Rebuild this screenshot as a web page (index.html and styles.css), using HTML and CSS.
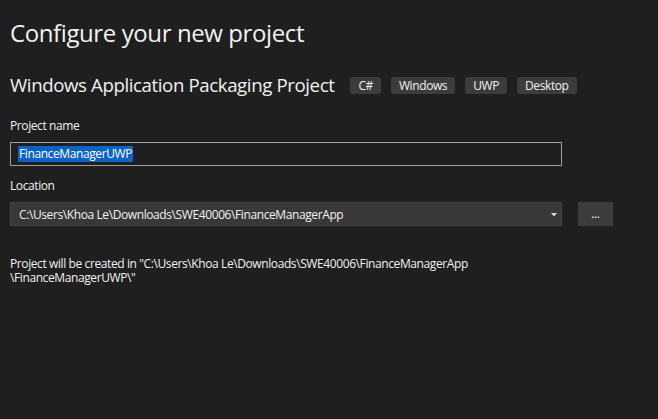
FILE: index.html
```html
<!DOCTYPE html>
<html lang="en">
<head>
<meta charset="utf-8">
<title>Configure your new project</title>
<link rel="stylesheet" href="styles.css">
</head>
<body>
<main class="page">
  <h1 class="title">Configure your new project</h1>
  <div class="subtitle-row">
    <h2 class="subtitle">Windows Application Packaging Project</h2>
    <div class="tags">
      <span class="tag">C#</span>
      <span class="tag">Windows</span>
      <span class="tag">UWP</span>
      <span class="tag">Desktop</span>
    </div>
  </div>

  <label class="label label-name">Project name</label>
  <div class="textbox"><span class="selected">FinanceManagerUWP</span></div>

  <label class="label label-location">Location</label>
  <div class="location-row">
    <div class="combo">
      <span class="combo-text">C:\Users\Khoa Le\Downloads\SWE40006\FinanceManagerApp</span>
      <svg class="arrow" width="6" height="3" viewBox="0 0 6 3"><path d="M0 0H6L3.5 3H2.5Z" fill="#d8d8d8"/></svg>
    </div>
    <div class="browse">...</div>
  </div>

  <p class="info">Project will be created in "C:\Users\Khoa Le\Downloads\SWE40006\FinanceManagerApp<br>\FinanceManagerUWP\"</p>
</main>
</body>
</html>
```

FILE: styles.css
```css
html, body {
  margin: 0;
  padding: 0;
  background: #1f1f1f;
  height: 100%;
}
body {
  font-family: "Open Sans", "Noto Sans", sans-serif;
  color: #f1f1f1;
  letter-spacing: -0.025em;
}
.page {
  display: flex;
  flex-direction: column;
  align-items: flex-start;
  padding: 0 0 0 10px;
}
.title {
  margin: 17px 0 0 0;
  font-size: 24px;
  font-weight: 400;
  line-height: 32px;
}
.subtitle-row {
  display: flex;
  align-items: center;
  margin-top: 23px;
  height: 26px;
}
.subtitle {
  margin: 0;
  font-size: 18.67px;
  font-weight: 400;
  line-height: 26px;
}
.tags {
  display: flex;
  gap: 10px;
  margin-left: 16px;
  margin-top: 1px;
}
.tag {
  display: flex;
  align-items: center;
  height: 17px;
  padding: 0 8px;
  background: #3c3c3c;
  border-radius: 3px;
  font-size: 12px;
  color: #f1f1f1;
}
.label {
  font-size: 12px;
  line-height: 16px;
}
.label-name {
  margin-top: 20px;
}
.textbox {
  box-sizing: border-box;
  width: 552px;
  height: 24px;
  margin-top: 8px;
  border: 1px solid #9d9d9d;
  display: flex;
  align-items: center;
  padding-left: 7px;
  font-size: 12px;
}
.selected {
  background: #0a64c8;
  color: #fff;
  line-height: 16px;
  padding: 0 1px;
}
.label-location {
  margin-top: 12px;
}
.location-row {
  display: flex;
  gap: 16px;
  margin-top: 8px;
}
.combo {
  box-sizing: border-box;
  width: 552px;
  height: 24px;
  background: #383838;
  border: 1px solid #434343;
  display: flex;
  align-items: center;
  justify-content: space-between;
  padding: 0 4px 0 8px;
  font-size: 12px;
}
.browse {
  box-sizing: border-box;
  width: 35px;
  height: 24px;
  background: #3c3c3c;
  display: flex;
  align-items: center;
  justify-content: center;
  font-size: 12px;
  line-height: 12px;
}
.info {
  margin: 31px 0 0 0;
  font-size: 12px;
  line-height: 14px;
}
```
